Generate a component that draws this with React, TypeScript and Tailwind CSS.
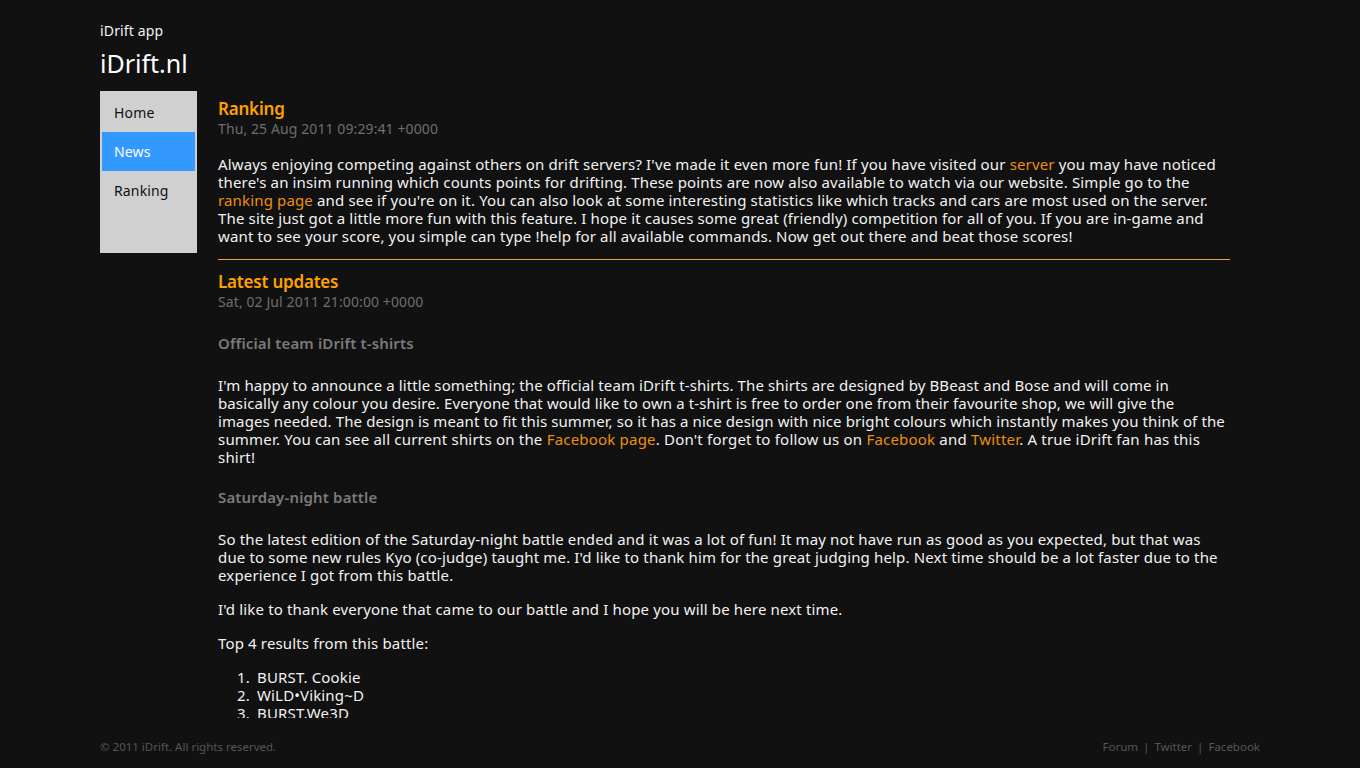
const font = { fontFamily: '"Noto Sans", "Open Sans", sans-serif' };

const navItems = [
  { label: 'Home', active: false },
  { label: 'News', active: true },
  { label: 'Ranking', active: false }
];

const results = ['BURST. Cookie', 'WiLD•Viking~D', 'BURST.We3D', 'Stef'];

function Link({ children }: { children: React.ReactNode }) {
  return <a className="text-[#ec8f0c]">{children}</a>;
}

function PostHeader({ title, date }: { title: string; date: string }) {
  return (
    <div>
      <h2 className="text-[17px] leading-[23px] font-semibold tracking-[-0.2px] text-[#ffa200]">{title}</h2>
      <div className="text-[14px] leading-[18px] tracking-[0.1px] text-[#6e6e6e]">{date}</div>
    </div>
  );
}

export default function App() {
  return (
    <div style={font} className="min-h-screen bg-[#111111] text-[#f2f2f2] tracking-[0.15px]">
      <div className="mx-[100px] flex flex-col">
        <header className="pt-[21px]">
          <div className="text-[14px] leading-[20px] text-[#f2f2f2]">iDrift app</div>
          <h1 className="mt-[6px] text-[25px] leading-[32px] tracking-[0px] text-white">iDrift.nl</h1>
        </header>

        <div className="mt-[12px] flex h-[627px] gap-[21px] overflow-hidden">
          <nav className="flex h-[162px] w-[97px] shrink-0 flex-col bg-[#d0d0d0] px-[2px] pt-[2px]">
            {navItems.map((item) => (
              <a
                key={item.label}
                className={
                  item.active
                    ? 'flex h-[39px] items-center bg-[#3399ff] pl-[12px] text-[14px] text-white'
                    : 'flex h-[39px] items-center pl-[12px] text-[14px] text-[#111111]'
                }
              >
                {item.label}
              </a>
            ))}
          </nav>

          <main className="w-[1012px] pt-[6px] text-[15px] leading-[18px]">
            <article>
              <PostHeader title="Ranking" date="Thu, 25 Aug 2011 09:29:41 +0000" />
              <p className="mt-[17px]">
                Always enjoying competing against others on drift servers? I've made it even more fun! If you have
                visited our <Link>server</Link> you may have noticed there's an insim running which counts points for
                drifting. These points are now also available to watch via our website. Simple go to the{' '}
                <Link>ranking page</Link> and see if you're on it. You can also look at some interesting statistics like
                which tracks and cars are most used on the server. The site just got a little more fun with this
                feature. I hope it causes some great (friendly) competition for all of you. If you are in-game and want
                to see your score, you simple can type !help for all available commands. Now get out there and beat
                those scores!
              </p>
            </article>

            <hr className="mt-[14px] mb-[10px] border-0 border-t border-[#e9a13a]" />

            <article>
              <PostHeader title="Latest updates" date="Sat, 02 Jul 2011 21:00:00 +0000" />
              <h3 className="mt-[23px] font-semibold text-[#7a7a7a]">Official team iDrift t-shirts</h3>
              <p className="mt-[24px] tracking-[0.11px]">
                I'm happy to announce a little something; the official team iDrift t-shirts. The shirts are designed by
                BBeast and Bose and will come in basically any colour you desire. Everyone that would like to own a
                t-shirt is free to order one from their favourite shop, we will give the images needed. The design is
                meant to fit this summer, so it has a nice design with nice bright colours which instantly makes you
                think of the{' '}
                <span className="tracking-[0.2px]">
                  summer. You can see all current shirts on the <Link>Facebook page</Link>. Don't forget to follow us
                  on <Link>Facebook</Link> and <Link>Twitter</Link>. A true iDrift fan has this shirt!
                </span>
              </p>
              <h3 className="mt-[22px] font-semibold text-[#7a7a7a]">Saturday-night battle</h3>
              <p className="mt-[24px]">
                So the latest edition of the Saturday-night battle ended and it was a lot of fun! It may not have run as
                good as you expected, but that was due to some new rules Kyo (co-judge) taught me. I'd like to thank him
                for the great judging help. Next time should be a lot faster due to the experience I got from this
                battle.
              </p>
              <p className="mt-[16px]">I'd like to thank everyone that came to our battle and I hope you will be here next time.</p>
              <p className="mt-[16px]">Top 4 results from this battle:</p>
              <ol className="mt-[16px] list-decimal pl-[36px]">
                {results.map((r) => (
                  <li key={r} className="pl-[3px]">
                    {r}
                  </li>
                ))}
              </ol>
            </article>
          </main>
        </div>

        <footer className="flex items-center justify-between pt-[20px] text-[11.5px] leading-[18px] tracking-[0px] text-[#555555]">
          <span>© 2011 iDrift. All rights reserved.</span>
          <div className="flex items-center gap-[5px]">
            <a>Forum</a>
            <span>|</span>
            <a>Twitter</a>
            <span>|</span>
            <a>Facebook</a>
          </div>
        </footer>
      </div>
    </div>
  );
}
